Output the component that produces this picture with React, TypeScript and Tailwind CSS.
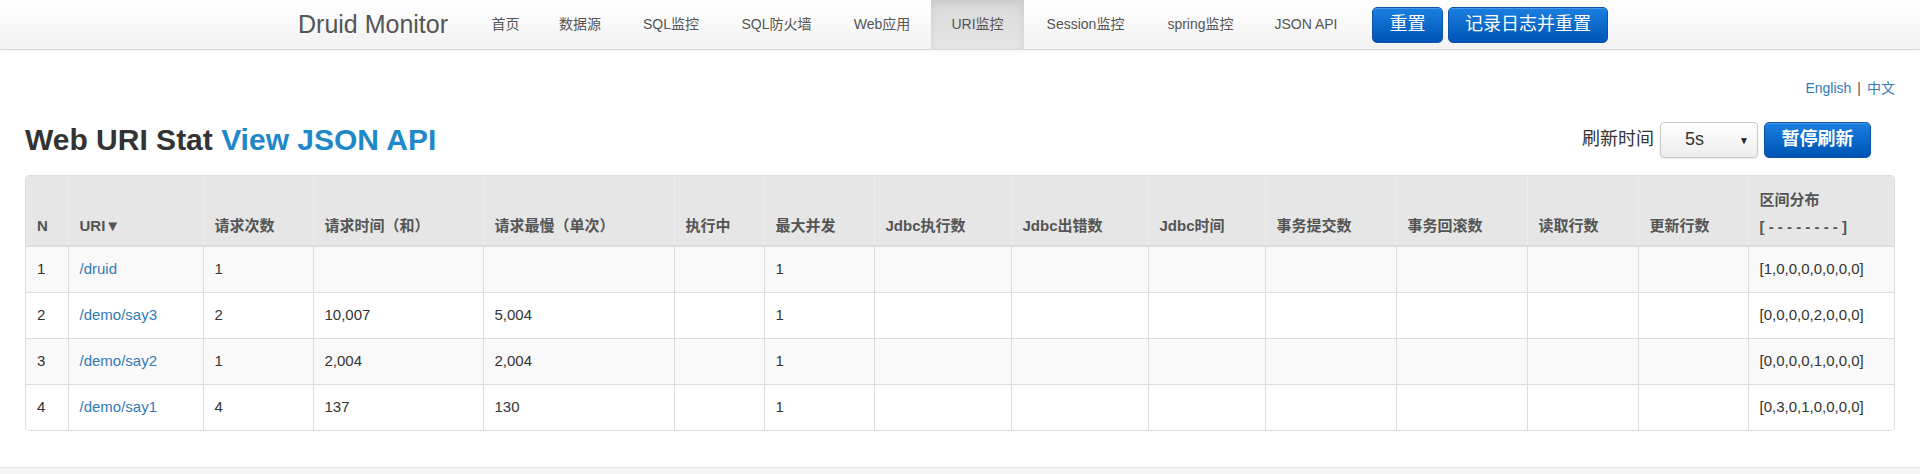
import React from "react";

const navItems = [
  { label: "首页", w: "w-[65px]" },
  { label: "数据源", w: "w-[84px]" },
  { label: "SQL监控", w: "w-[98px]" },
  { label: "SQL防火墙", w: "w-[113px]" },
  { label: "Web应用", w: "w-[98px]" },
  { label: "URI监控", w: "w-[93px]", active: true },
  { label: "Session监控", w: "w-[123px]" },
  { label: "spring监控", w: "w-[107px]" },
  { label: "JSON API", w: "w-[104px]" },
];

const columns = [
  { label: "N", w: "w-[42px]" },
  { label: "URI▼", w: "w-[135px]" },
  { label: "请求次数", w: "w-[110px]" },
  { label: "请求时间（和）", w: "w-[170px]" },
  { label: "请求最慢（单次）", w: "w-[191px]" },
  { label: "执行中", w: "w-[90px]" },
  { label: "最大并发", w: "w-[110px]" },
  { label: "Jdbc执行数", w: "w-[137px]" },
  { label: "Jdbc出错数", w: "w-[137px]" },
  { label: "Jdbc时间", w: "w-[117px]" },
  { label: "事务提交数", w: "w-[131px]" },
  { label: "事务回滚数", w: "w-[131px]" },
  { label: "读取行数", w: "w-[111px]" },
  { label: "更新行数", w: "w-[110px]" },
  { label: "区间分布", w: "w-[147px]" },
];

const rows = [
  { n: 1, uri: "/druid", count: "1", time: "", slowest: "", conc: "1", hist: "[1,0,0,0,0,0,0,0]" },
  { n: 2, uri: "/demo/say3", count: "2", time: "10,007", slowest: "5,004", conc: "1", hist: "[0,0,0,0,2,0,0,0]" },
  { n: 3, uri: "/demo/say2", count: "1", time: "2,004", slowest: "2,004", conc: "1", hist: "[0,0,0,0,1,0,0,0]" },
  { n: 4, uri: "/demo/say1", count: "4", time: "137", slowest: "130", conc: "1", hist: "[0,3,0,1,0,0,0,0]" },
];

const blueBtn =
  "flex items-center justify-center h-[36px] rounded-[5px] border border-[#0b52a8] bg-gradient-to-b from-[#1a80e2] to-[#0054b4] text-white text-[18px] shadow-[inset_0_1px_0_rgba(255,255,255,0.2)]";

const NavBar: React.FC = () => (
  <div className="h-[50px] border-b border-[#d9d9d9] bg-gradient-to-b from-white to-[#f2f2f2] shadow-[0_1px_4px_rgba(0,0,0,0.06)]">
    <div className="mx-auto w-[1324px] h-full flex items-center">
      <div className="w-[175px] text-[25px] text-[#555]">Druid Monitor</div>
      {navItems.map((item) => (
        <div
          key={item.label}
          className={`${item.w} h-full flex items-center justify-center text-[14px] text-[#555] ${
            item.active
              ? "bg-gradient-to-b from-[#d9d9d9] to-[#e6e6e6] shadow-[inset_0_3px_9px_rgba(0,0,0,0.08)]"
              : ""
          }`}
        >
          {item.label}
        </div>
      ))}
      <div className="flex items-center gap-[5px] ml-[14px]">
        <button className={`${blueBtn} w-[71px]`}>重置</button>
        <button className={`${blueBtn} w-[160px]`}>记录日志并重置</button>
      </div>
    </div>
  </div>
);

const Cell: React.FC<{ children?: React.ReactNode; link?: boolean }> = ({ children, link }) => (
  <td
    className={`h-[46px] px-[11px] align-middle border-l border-[#ddd] first:border-l-0 ${
      link ? "text-[#337ab7]" : "text-[#333]"
    }`}
  >
    {children}
  </td>
);

const UriTable: React.FC = () => (
  <div className="border border-[#ddd] rounded-[4px] overflow-hidden">
    <table className="w-full table-fixed border-collapse text-[15px] leading-[20px]">
      <colgroup>
        {columns.map((c) => (
          <col key={c.label} className={c.w} />
        ))}
      </colgroup>
      <thead>
        <tr className="bg-[#e6e6e6] border-b-2 border-[#ddd]">
          {columns.map((c) => (
            <th
              key={c.label}
              className="h-[70px] px-[11px] pb-[9px] align-bottom text-left font-bold text-[#555] border-l border-[#ececec] first:border-l-0"
            >
              {c.label === "区间分布" ? (
                <div className="leading-[27px] -mb-[4px]">
                  区间分布
                  <br />[ - - - - - - - - ]
                </div>
              ) : (
                c.label
              )}
            </th>
          ))}
        </tr>
      </thead>
      <tbody>
        {rows.map((r) => (
          <tr key={r.n} className={`border-t border-[#ddd] ${r.n % 2 === 1 ? "bg-[#f9f9f9]" : "bg-white"}`}>
            <Cell>{r.n}</Cell>
            <Cell link>{r.uri}</Cell>
            <Cell>{r.count}</Cell>
            <Cell>{r.time}</Cell>
            <Cell>{r.slowest}</Cell>
            <Cell />
            <Cell>{r.conc}</Cell>
            <Cell />
            <Cell />
            <Cell />
            <Cell />
            <Cell />
            <Cell />
            <Cell />
            <Cell>{r.hist}</Cell>
          </tr>
        ))}
      </tbody>
    </table>
  </div>
);

const App: React.FC = () => {
  return (
    <div className="min-h-[474px] bg-white font-['Liberation_Sans','Noto_Sans_CJK_SC',sans-serif] text-[#333]">
      <NavBar />
      <div className="px-[25px]">
        <div className="mt-[28px] flex justify-end text-[14px] leading-[20px]">
          <span className="text-[#337ab7]">English</span>
          <span className="mx-[6px] text-[#555]">|</span>
          <span className="text-[#337ab7]">中文</span>
        </div>
        <div className="mt-[23px] flex items-center justify-between h-[37px]">
          <h2 className="text-[30px] font-bold leading-[33px] text-[#333]">
            Web URI Stat <span className="text-[#1e88c8]">View JSON API</span>
          </h2>
          <div className="flex items-center mr-[24px]">
            <span className="text-[18px] text-[#333] mr-[6px]">刷新时间</span>
            <div className="relative w-[98px] h-[36px] rounded-[4px] border border-[#c8c8c8] bg-gradient-to-b from-white to-[#ededed] shadow-[0_1px_2px_rgba(0,0,0,0.08)] flex items-center pl-[24px] text-[18px] text-[#333]">
              5s
              <span className="absolute right-[8px] top-[10px] text-[10px] text-[#222]">▼</span>
            </div>
            <button className={`${blueBtn} w-[107px] ml-[6px] font-bold`}>暂停刷新</button>
          </div>
        </div>
        <div className="mt-[17px]">
          <UriTable />
        </div>
      </div>
      <div className="mt-[36px] h-[10px] border-t border-[#e5e5e5] bg-[#f5f5f5]" />
    </div>
  );
};

export default App;
